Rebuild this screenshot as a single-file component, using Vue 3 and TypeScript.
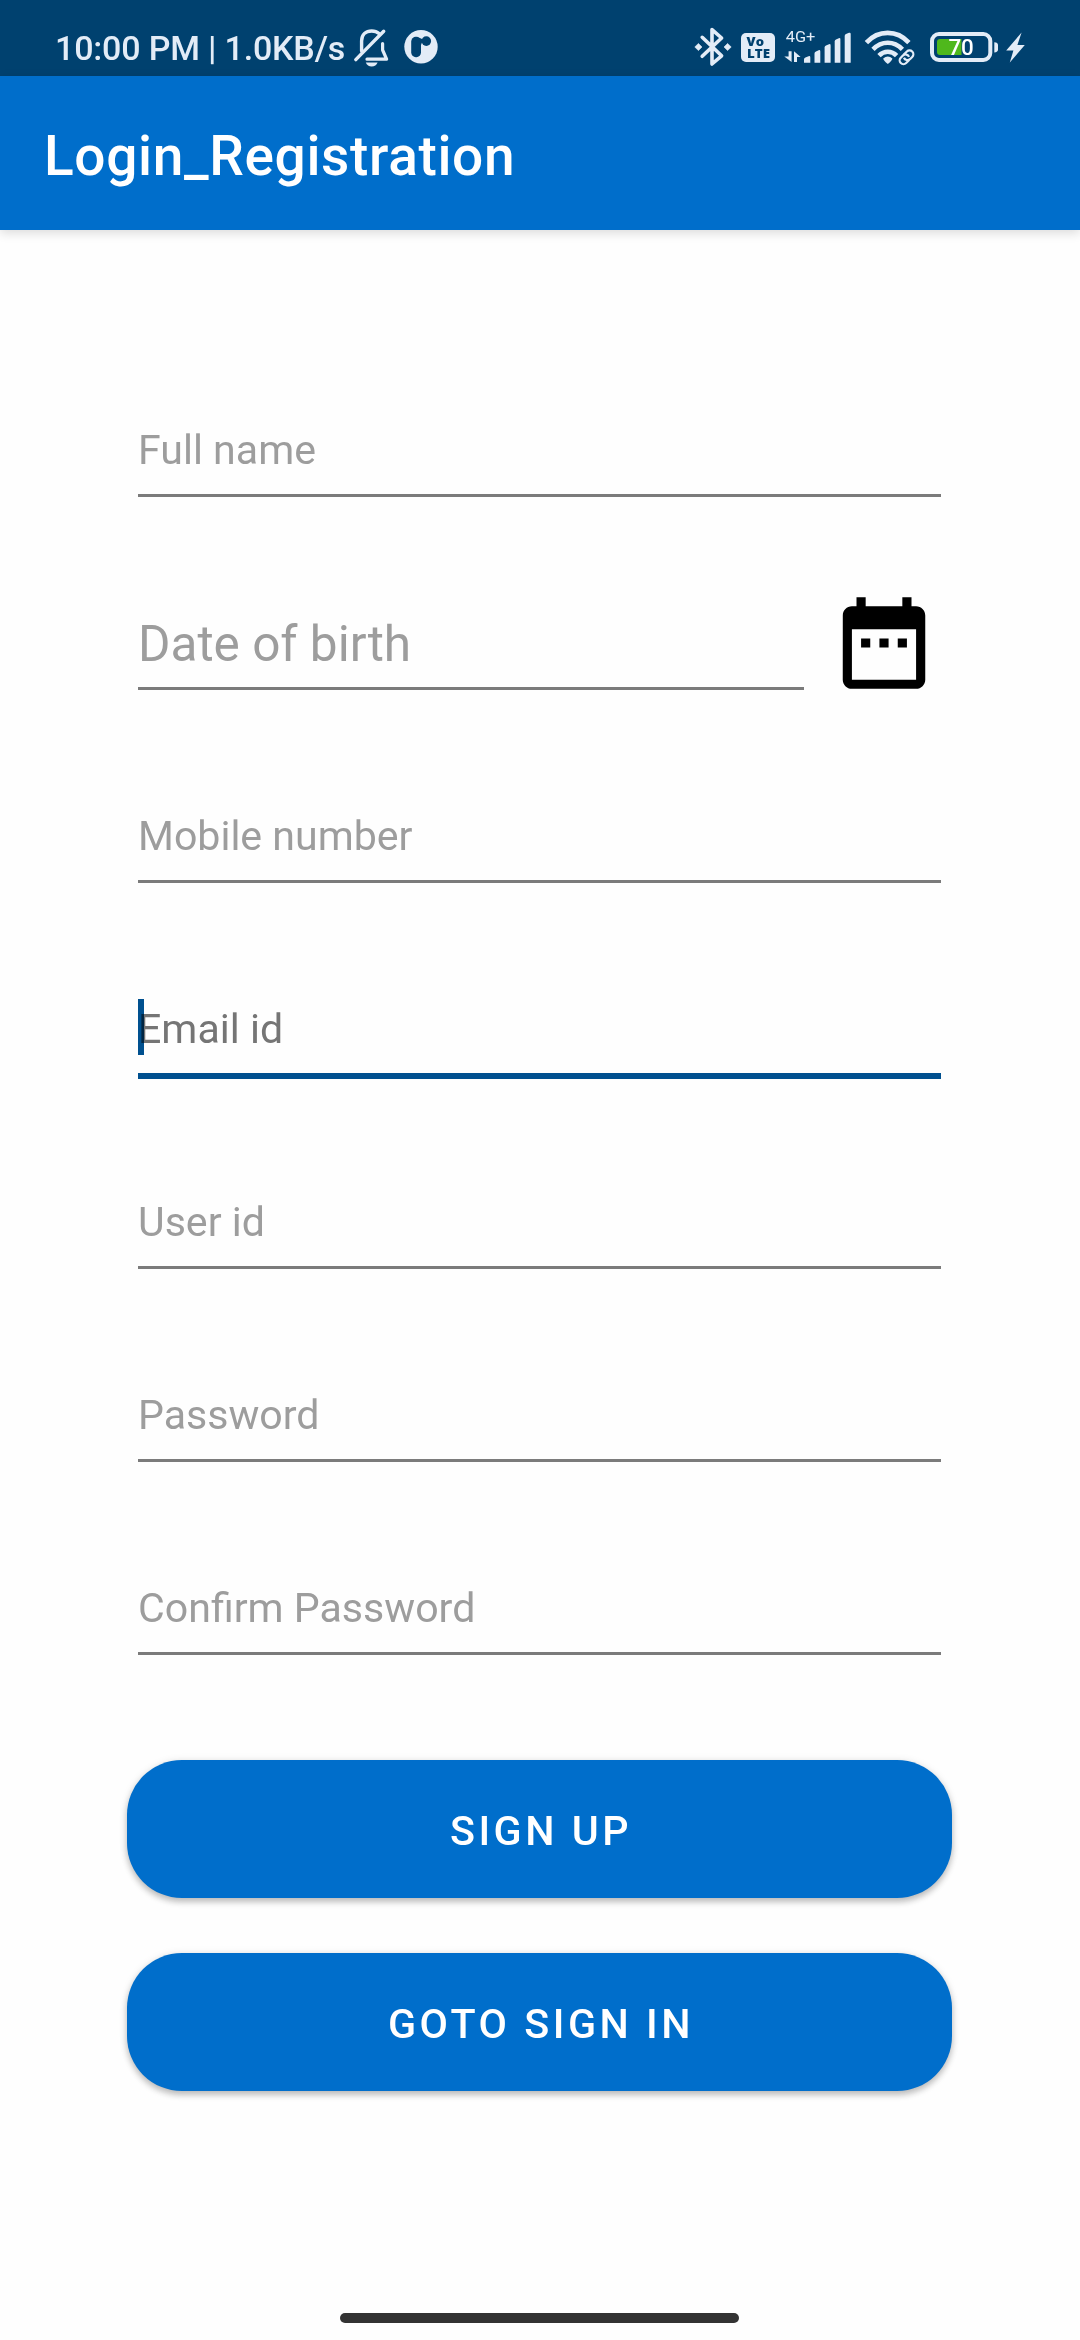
<script setup lang="ts">
interface Field {
  id: string
  hint: string
  large?: boolean
  focused?: boolean
  picker?: boolean
}

const fields: Field[] = [
  { id: 'name', hint: 'Full name' },
  { id: 'dob', hint: 'Date of birth', large: true, picker: true },
  { id: 'mobile', hint: 'Mobile number' },
  { id: 'email', hint: 'Email id', focused: true },
  { id: 'user', hint: 'User id' },
  { id: 'password', hint: 'Password' },
  { id: 'confirm', hint: 'Confirm Password' },
]

const actions: string[] = ['SIGN UP', 'GOTO SIGN IN']
</script>

<template>
  <div class="screen">
    <header class="status">
      <span class="clock">10:00 PM | 1.0KB/s</span>
      <svg class="bell" width="44" height="76" viewBox="350 0 44 76">
        <g fill="none" stroke="#e3ecf7" stroke-width="3.4" stroke-linecap="round" stroke-linejoin="round">
          <path d="M355.8 59.6L383.7 31.3" />
          <path d="M361.6 51V41C361.6 34.5 366 31 371.7 31C374.5 31 377 31.8 379 33.6" />
          <path d="M382.6 43.5V50L386.6 59.2H367" stroke-width="3.2" />
        </g>
        <path d="M365.8 62.6H377.6C376.6 65.2 374.5 66.5 371.7 66.5S366.8 65.2 365.8 62.6Z" fill="#e3ecf7" />
      </svg>
      <svg class="app-dot" width="36" height="76" viewBox="403 0 36 76">
        <circle cx="421" cy="46.8" r="16.7" fill="#e3ecf7" />
        <rect x="411.2" y="36.8" width="9.8" height="20.4" rx="4.6" fill="#00416f" />
        <path d="M418.6 37.6L423.2 39.6L421 45Z" fill="#00416f" />
        <circle cx="426.3" cy="41.1" r="4.8" fill="#00416f" />
      </svg>
      <span class="spacer"></span>
      <svg width="40" height="76" viewBox="693 0 40 76">
        <path d="M702.2 37.3L721.6 55.8L712 64V29.6L721.6 38L702.2 56.3" fill="none" stroke="#e3ecf7" stroke-width="3.6" stroke-linecap="round" stroke-linejoin="round" />
        <path d="M694.8 47L698.4 43.4L702 47L698.4 50.6ZM724 47L727.6 43.4L731.2 47L727.6 50.6Z" fill="#e3ecf7" stroke="#e3ecf7" stroke-width=".6" />
      </svg>
      <svg width="50" height="76" viewBox="733 0 50 76">
        <rect x="741" y="33" width="34" height="29" rx="5" fill="#e3ecf7" />
        <text x="746.6" y="46" class="volte" textLength="17.4" lengthAdjust="spacingAndGlyphs">Vo</text>
        <text x="747" y="58.3" class="volte" textLength="23" lengthAdjust="spacingAndGlyphs">LTE</text>
      </svg>
      <svg width="77" height="76" viewBox="783 0 77 76">
        <text x="785.8" y="42" class="net" textLength="29.6" lengthAdjust="spacingAndGlyphs">4G+</text>
        <g fill="#e3ecf7">
          <path d="M788.6 51.3H791.6V62L784.3 56.6H788.6Z" />
          <path d="M794 62V51.3L800.6 57H797V62Z" />
          <path d="M804 62.7V59.4Q804 58 805.4 57.5L808.6 56.2Q810.3 55.6 810.3 57.4V62.7Z" />
          <path d="M814.5 62.7V53.4Q814.5 52 816 51.4L818.6 50.2Q820.3 49.6 820.3 51.4V62.7Z" />
          <path d="M824.6 62.7V47.4Q824.6 46 826 45.4L829 44.2Q830.6 43.6 830.6 45.4V62.7Z" />
          <path d="M834.7 62.7V41.4Q834.7 40 836 39.4L838.8 38.2Q840.4 37.6 840.4 39.4V62.7Z" />
          <path d="M844.7 62.7V36Q844.7 34.6 846 34L849 32.8Q850.7 32.2 850.7 34V62.7Z" />
        </g>
      </svg>
      <svg width="64" height="76" viewBox="860 0 64 76">
        <g fill="none" stroke="#e3ecf7" stroke-width="4.6">
          <path d="M866.4 42.6C878.4 29.6 896.9 29.6 908.9 42.6" />
          <path d="M873 49.4C881.6 40.6 893.9 40.6 902.4 49.4" />
          <path d="M879 55.6C884 50.4 891.6 50.4 896.6 55.6" />
        </g>
        <path d="M883.2 58.4Q887.8 54.8 892.4 58.4Q892 60.6 887.8 64Q883.6 60.6 883.2 58.4Z" fill="#e3ecf7" />
        <g transform="rotate(-45 906.5 57.3)" fill="none" stroke="#e3ecf7" stroke-width="2.2">
          <path d="M906.5 61.1H902.2A3.8 3.8 0 0 1 902.2 53.5H905.4A3.8 3.8 0 0 1 908.6 58.8" />
          <path d="M906.5 53.5H910.8A3.8 3.8 0 0 1 910.8 61.1H907.6A3.8 3.8 0 0 1 904.4 55.8" />
        </g>
      </svg>
      <svg width="156" height="76" viewBox="924 0 156 76">
        <rect x="932" y="34" width="58.3" height="26" rx="7" fill="none" stroke="#e3ecf7" stroke-width="4" />
        <path d="M940 39H961.5V55H940A3 3 0 0 1 937 52V42A3 3 0 0 1 940 39Z" fill="#4fb81c" />
        <text x="948.4" y="55.4" class="charge" textLength="25.4" lengthAdjust="spacingAndGlyphs">70</text>
        <path d="M994.3 42.3Q998 42.6 998 45V49.7Q998 52.1 994.3 52.4Z" fill="#e3ecf7" />
        <path d="M1021.6 32.6L1006.2 50.4H1013.4L1009.8 62.4L1024.8 45H1017.4Z" fill="#e3ecf7" />
      </svg>
    </header>

    <div class="appbar"><h1>Login_Registration</h1></div>

    <main>
      <div v-for="f in fields" :key="f.id" class="row">
        <div class="field" :class="{ focused: f.focused, large: f.large }">
          <i v-if="f.focused" class="caret"></i>
          <span class="hint">{{ f.hint }}</span>
        </div>
        <svg v-if="f.picker" class="calendar" viewBox="0 0 24 24">
          <path d="M9 11H7v2h2v-2zm4 0h-2v2h2v-2zm4 0h-2v2h2v-2zm2-7h-1V2h-2v2H8V2H6v2H5c-1.11 0-1.99.9-1.99 2L3 20c0 1.1.89 2 2 2h14c1.1 0 2-.9 2-2V6c0-1.1-.9-2-2-2zm0 16H5V9h14v11z" />
        </svg>
      </div>
      <div class="actions">
        <button v-for="a in actions" :key="a" type="button">{{ a }}</button>
      </div>
    </main>
    <div class="home-bar"></div>
  </div>
</template>

<style>
body {
  margin: 0;
  background: #fefefe;
}
</style>

<style scoped>
.screen {
  width: 1080px;
  height: 2340px;
  display: flex;
  flex-direction: column;
  background: #fefefe;
  font-family: Roboto, sans-serif;
  overflow: hidden;
}
.status {
  height: 76px;
  flex: none;
  display: flex;
  background: #00416f;
}
.status svg {
  flex: none;
}
.clock {
  width: 295px;
  padding-left: 55px;
  flex: none;
  line-height: 40px;
  padding-top: 28px;
  font-size: 34px;
  font-weight: 500;
  letter-spacing: -0.18px;
  white-space: nowrap;
  color: #e3ecf7;
}
.app-dot {
  margin-left: 9px;
}
.spacer {
  flex: 1;
}
.volte {
  font: 800 12.4px 'Open Sans', sans-serif;
  fill: #00416f;
}
.net {
  font: 400 15.4px Roboto, sans-serif;
  fill: #e3ecf7;
}
.charge {
  font: 500 21.6px Roboto, sans-serif;
  fill: #fff;
}
.appbar {
  height: 154px;
  box-sizing: border-box;
  flex: none;
  display: flex;
  align-items: center;
  padding: 6px 0 0 44px;
  background: #006ecb;
  box-shadow: 0 3px 10px rgba(0, 0, 0, 0.14);
}
h1 {
  margin: 0;
  font-size: 55px;
  font-weight: 500;
  line-height: 64px;
  letter-spacing: 0.65px;
  color: #fff;
}
main {
  padding: 74px 128px 0 138px;
}
.row {
  height: 193px;
  display: flex;
  align-items: flex-end;
}
.field {
  position: relative;
  flex: 1;
  height: 100px;
  margin-right: 11px;
  box-sizing: border-box;
  padding-top: 29px;
  border-bottom: 3px solid #7b7b7b;
  font-size: 41.1px;
  line-height: 48px;
  color: #9e9e9e;
}
.field.large {
  font-size: 49.5px;
  line-height: 58px;
  padding-top: 25px;
}
.field.focused {
  height: 103px;
  margin-bottom: -3px;
  border-bottom: 6px solid #00508f;
  color: #757575;
}
.caret {
  position: absolute;
  left: 0;
  top: 23px;
  width: 6px;
  height: 56px;
  background: #00508f;
}
.hint {
  position: relative;
  mix-blend-mode: multiply;
}
.calendar {
  width: 110px;
  height: 110px;
  flex: none;
  margin: 0 13px -8px 14px;
  fill: #000;
}
.actions {
  display: flex;
  flex-direction: column;
  gap: 55px;
  margin: 105px 0 0 -11px;
}
button {
  height: 138px;
  border: 0;
  border-radius: 55px;
  padding: 4px 0 0 3px;
  background: #006ecb;
  color: #fff;
  font: 500 41.25px / 48px Roboto, sans-serif;
  letter-spacing: 3.5px;
  box-shadow: 0 4px 6px rgba(0, 0, 0, 0.22), 0 1px 8px rgba(0, 0, 0, 0.1);
}
.home-bar {
  width: 399px;
  height: 10px;
  margin: auto 0 17px 340px;
  border-radius: 5px;
  background: #333;
}
</style>
